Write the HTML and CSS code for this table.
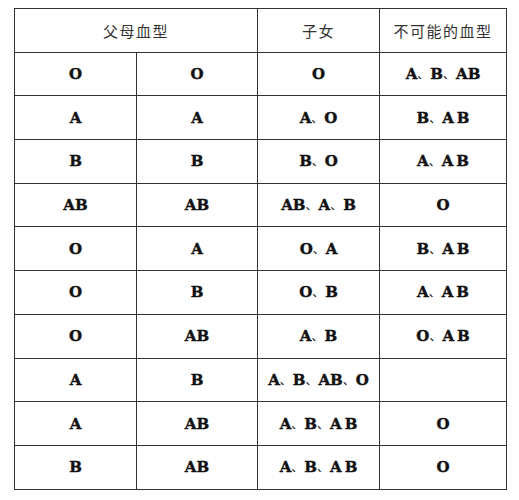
FILE: index.html
```html
<!DOCTYPE html>
<html lang="zh">
<head>
<meta charset="utf-8">
<link rel="stylesheet" href="styles.css">
</head>
<body>
<table class="blood">
  <colgroup>
    <col class="c1"><col class="c2"><col class="c3"><col class="c4">
  </colgroup>
  <thead>
    <tr>
      <th colspan="2">父母血型</th>
      <th>子女</th>
      <th>不可能的血型</th>
    </tr>
  </thead>
  <tbody>
    <tr><td>O</td><td>O</td><td>O</td><td>A<span class="sep">、</span>B<span class="sep">、</span>AB</td></tr>
    <tr><td>A</td><td>A</td><td>A<span class="sep">、</span>O</td><td>B<span class="sep">、</span>A&#8201;B</td></tr>
    <tr><td>B</td><td>B</td><td>B<span class="sep">、</span>O</td><td>A<span class="sep">、</span>A&#8201;B</td></tr>
    <tr><td>AB</td><td>AB</td><td>AB<span class="sep">、</span>A<span class="sep">、</span>B</td><td>O</td></tr>
    <tr><td>O</td><td>A</td><td>O<span class="sep">、</span>A</td><td>B<span class="sep">、</span>A&#8201;B</td></tr>
    <tr><td>O</td><td>B</td><td>O<span class="sep">、</span>B</td><td>A<span class="sep">、</span>A&#8201;B</td></tr>
    <tr><td>O</td><td>AB</td><td>A<span class="sep">、</span>B</td><td>O<span class="sep">、</span>A&#8201;B</td></tr>
    <tr><td>A</td><td>B</td><td>A<span class="sep">、</span>B<span class="sep">、</span>AB<span class="sep">、</span>O</td><td></td></tr>
    <tr><td>A</td><td>AB</td><td>A<span class="sep">、</span>B<span class="sep">、</span>A&#8201;B</td><td>O</td></tr>
    <tr><td>B</td><td>AB</td><td>A<span class="sep">、</span>B<span class="sep">、</span>A&#8201;B</td><td>O</td></tr>
  </tbody>
</table>
</body>
</html>
```

FILE: styles.css
```css
html, body {
  margin: 0;
  padding: 0;
  background: #ffffff;
}
body {
  padding: 8px 0 0 14px;
}
.blood {
  border-collapse: collapse;
  table-layout: fixed;
  width: 492px;
}
.c1 { width: 122px; }
.c2 { width: 121px; }
.c3 { width: 122px; }
.c4 { width: 127px; }
.blood th,
.blood td {
  border: 1px solid #333333;
  text-align: center;
  vertical-align: middle;
  padding: 0;
  height: 42.7px;
}
.blood th {
  font-family: "Noto Sans CJK SC", sans-serif;
  font-weight: 400;
  font-size: 15px;
  color: #333333;
  letter-spacing: 1.5px;
}
.blood td {
  font-family: "DejaVu Serif", serif;
  font-weight: 700;
  font-size: 15px;
  color: #111111;
  -webkit-text-stroke: 0.4px #111111;
}
.sep {
  font-family: "Noto Sans CJK SC", sans-serif;
  font-weight: 400;
  font-size: 12px;
  display: inline-block;
  width: 13px;
  text-align: left;
  -webkit-text-stroke: 0;
}
```
